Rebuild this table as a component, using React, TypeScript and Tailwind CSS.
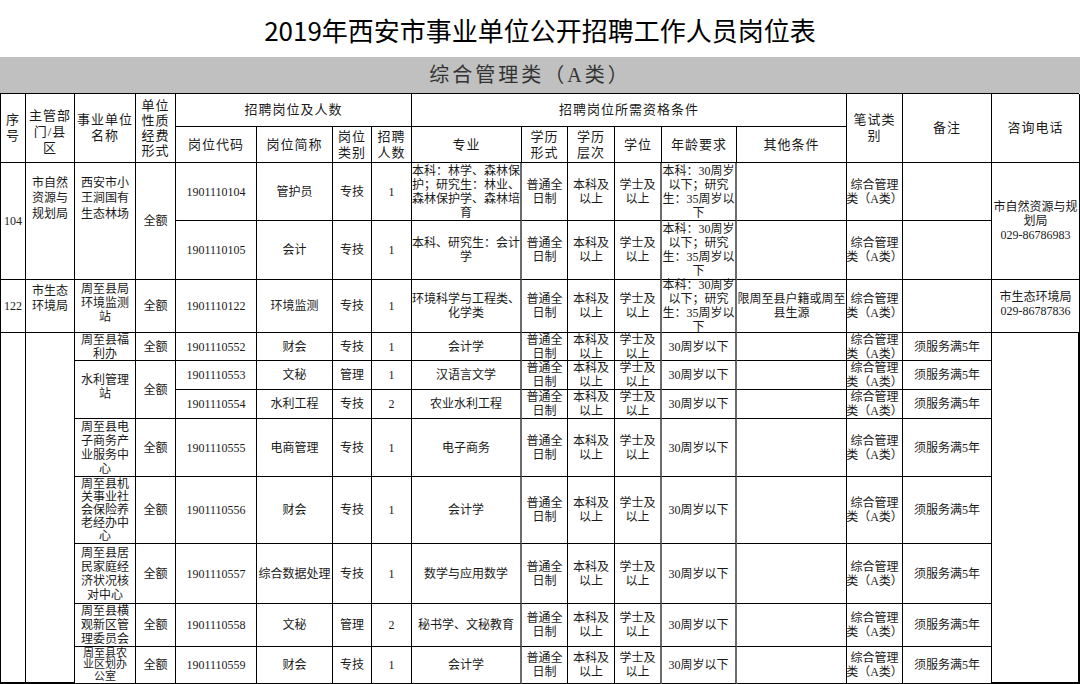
type Cell = { t?: string; c?: string; k?: string };

const G = 'border-r-2 border-r-[#6b6b6b]';

const AGE = '本科：30周岁\n以下；研究\n生：35周岁以\n下';
const EXAM = '综合管理\n类（A类）';

function req(major: string, age: string, other: string, note: string): Cell[] {
  return [
    { t: major, c: G },
    { t: '普通全\n日制' },
    { t: '本科及\n以上' },
    { t: '学士及\n以上', c: G },
    { t: age, c: G },
    { t: other },
    { t: EXAM },
    { t: note },
  ];
}

const header: Cell[] = [
  { t: '序\n号', c: 'row-span-2' },
  { t: '主管部\n门/县\n区', c: 'row-span-2 pt-[8px]' },
  { t: '事业单位\n名称', c: 'row-span-2' },
  { t: '单位\n性质\n经费\n形式', c: 'row-span-2', k: 'leading-[15px]' },
  { t: '招聘岗位及人数', c: 'col-span-4' },
  { t: '招聘岗位所需资格条件', c: 'col-span-6' },
  { t: '笔试类\n别', c: 'row-span-2' },
  { t: '备注', c: 'row-span-2' },
  { t: '咨询电话', c: 'row-span-2' },
  { t: '岗位代码' },
  { t: '岗位简称' },
  { t: '岗位\n类别' },
  { t: '招聘\n人数' },
  { t: '专业' },
  { t: '学历\n形式' },
  { t: '学历\n层次' },
  { t: '学位' },
  { t: '年龄要求' },
  { t: '其他条件' },
];

const body: Cell[] = [
  // 104
  { t: '104', c: 'row-span-2' },
  { t: '市自然\n资源与\n规划局', c: 'row-span-2 pb-[44px]', k: 'leading-[15.5px]' },
  { t: '西安市小\n王涧国有\n生态林场', c: 'row-span-2 pb-[44px]', k: 'leading-[15.5px]' },
  { t: '全额', c: 'row-span-2' },
  { t: '1901110104' },
  { t: '管护员' },
  { t: '专技' },
  { t: '1' },
  ...req('本科：林学、森林保\n护；研究生：林业、\n森林保护学、森林培\n育', AGE, '', ''),
  { t: '市自然资源与规\n划局\n029-86786983', c: 'row-span-2' },
  { t: '1901110105' },
  { t: '会计' },
  { t: '专技' },
  { t: '1' },
  ...req('本科、研究生：会计\n学', AGE, '', ''),
  // 122
  { t: '122' },
  { t: '市生态\n环境局', c: 'pb-[14px]', k: 'leading-[15px]' },
  { t: '周至县局\n环境监测\n站', c: 'pb-[6px]' },
  { t: '全额' },
  { t: '1901110122' },
  { t: '环境监测' },
  { t: '专技' },
  { t: '1' },
  ...req('环境科学与工程类、\n化学类', AGE, '限周至县户籍或周至\n县生源', ''),
  { t: '市生态环境局\n029-86787836', c: 'pb-[4px]' },
  // 周至县
  { t: '', c: 'row-span-8 border-b-2' },
  { t: '', c: 'row-span-8 border-b-2' },
  { t: '周至县福\n利办' },
  { t: '全额' },
  { t: '1901110552' },
  { t: '财会' },
  { t: '专技' },
  { t: '1' },
  ...req('会计学', '30周岁以下', '', '须服务满5年'),
  { t: '', c: 'row-span-8 border-b-2 border-r-2' },
  { t: '水利管理\n站', c: 'row-span-2 pb-[6px]' },
  { t: '全额', c: 'row-span-2' },
  { t: '1901110553' },
  { t: '文秘' },
  { t: '管理' },
  { t: '1' },
  ...req('汉语言文学', '30周岁以下', '', '须服务满5年'),
  { t: '1901110554' },
  { t: '水利工程' },
  { t: '专技' },
  { t: '2' },
  ...req('农业水利工程', '30周岁以下', '', '须服务满5年'),
  { t: '周至县电\n子商务产\n业服务中\n心' },
  { t: '全额' },
  { t: '1901110555' },
  { t: '电商管理' },
  { t: '专技' },
  { t: '1' },
  ...req('电子商务', '30周岁以下', '', '须服务满5年'),
  { t: '周至县机\n关事业社\n会保险养\n老经办中\n心', k: 'leading-[13px]' },
  { t: '全额' },
  { t: '1901110556' },
  { t: '财会' },
  { t: '专技' },
  { t: '1' },
  ...req('会计学', '30周岁以下', '', '须服务满5年'),
  { t: '周至县居\n民家庭经\n济状况核\n对中心' },
  { t: '全额' },
  { t: '1901110557' },
  { t: '综合数据处理' },
  { t: '专技' },
  { t: '1' },
  ...req('数学与应用数学', '30周岁以下', '', '须服务满5年'),
  { t: '周至县横\n观新区管\n理委员会' },
  { t: '全额' },
  { t: '1901110558' },
  { t: '文秘' },
  { t: '管理' },
  { t: '2' },
  ...req('秘书学、文秘教育', '30周岁以下', '', '须服务满5年'),
  { t: '周至县农\n业区划办\n公室', k: 'text-[11px] leading-[11.5px]' },
  { t: '全额' },
  { t: '1901110559' },
  { t: '财会' },
  { t: '专技' },
  { t: '1' },
  ...req('会计学', '30周岁以下', '', '须服务满5年'),
];

export default function App() {
  return (
    <div className="w-[1080px] h-[684px] overflow-hidden bg-white text-[#1a1a1a] font-['Liberation_Serif','Noto_Sans_CJK_SC',serif]">
      <div className="flex h-[57px] items-center justify-center pt-[2px] font-['Noto_Sans_CJK_SC',sans-serif] text-[26px] font-normal text-black">
        2019年西安市事业单位公开招聘工作人员岗位表
      </div>
      <div className="flex h-[36px] items-center justify-center bg-[#c0c0c0] pr-[20px] font-['Liberation_Serif','Noto_Sans_CJK_SC',serif] text-[20px] tracking-[3px] text-[#333]">
        综合管理类（A类）
      </div>
      <div className="grid w-[1079px] grid-cols-[25px_49px_61px_40px_81px_76px_39px_40px_110px_46px_47px_47px_75px_110px_56px_89px_88px] grid-rows-[33px_36px_58px_59px_53px_28px_29px_29px_58px_67px_60px_43px_37px] border-l border-t border-black">
        {header.map((cell, i) => (
          <div
            key={'h' + i}
            className={`flex items-center justify-center whitespace-pre border-b border-r border-black text-center text-[13px] leading-[16px] tracking-[1px] ${cell.c ?? ''}`}
          >
            {cell.k ? <span className={`block ${cell.k}`}>{cell.t}</span> : cell.t}
          </div>
        ))}
        {body.map((cell, i) => (
          <div
            key={'b' + i}
            className={`flex items-center justify-center whitespace-pre border-b border-r border-black text-center text-[12px] leading-[14px] ${cell.c ?? ''}`}
          >
            {cell.k ? <span className={`block ${cell.k}`}>{cell.t}</span> : cell.t}
          </div>
        ))}
      </div>
    </div>
  );
}
